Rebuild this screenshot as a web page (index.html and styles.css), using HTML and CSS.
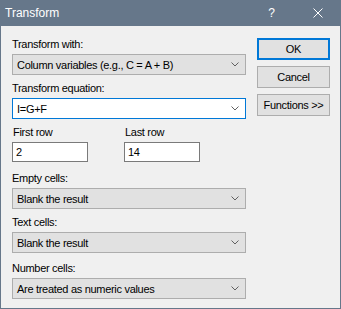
FILE: index.html
```html
<!DOCTYPE html>
<html lang="en">
<head>
    <meta charset="UTF-8">
    <title>Transform</title>
    <link rel="stylesheet" href="styles.css">
</head>
<body>
    <div class="dialog">
        <!-- Barra de título -->
        <div class="titlebar">
            <span class="title">Transform</span>
            <span class="help">?</span>
            <svg class="close" width="10" height="10" viewBox="0 0 10 10">
                <path d="M0.5 0.5 L9.5 9.5 M9.5 0.5 L0.5 9.5" stroke="#ffffff" stroke-width="1" fill="none"/>
            </svg>
        </div>

        <div class="client">
            <div class="form">
                <div class="field">
                    <label>Transform with:</label>
                    <div class="combo">
                        <span>Column variables (e.g., C = A + B)</span>
                        <svg class="chevron" width="8" height="5" viewBox="0 0 8 5"><path d="M0.5 0.5 L4 4 L7.5 0.5" stroke="#606060" fill="none"/></svg>
                    </div>
                </div>

                <div class="field">
                    <label>Transform equation:</label>
                    <div class="combo combo-edit">
                        <span>I=G+F</span>
                        <svg class="chevron" width="8" height="5" viewBox="0 0 8 5"><path d="M0.5 0.5 L4 4 L7.5 0.5" stroke="#606060" fill="none"/></svg>
                    </div>
                </div>

                <div class="field rows">
                    <div class="row-item">
                        <label>First row</label>
                        <div class="edit">2</div>
                    </div>
                    <div class="row-item">
                        <label>Last row</label>
                        <div class="edit">14</div>
                    </div>
                </div>

                <div class="field field-empty">
                    <label>Empty cells:</label>
                    <div class="combo">
                        <span>Blank the result</span>
                        <svg class="chevron" width="8" height="5" viewBox="0 0 8 5"><path d="M0.5 0.5 L4 4 L7.5 0.5" stroke="#606060" fill="none"/></svg>
                    </div>
                </div>

                <div class="field">
                    <label>Text cells:</label>
                    <div class="combo">
                        <span>Blank the result</span>
                        <svg class="chevron" width="8" height="5" viewBox="0 0 8 5"><path d="M0.5 0.5 L4 4 L7.5 0.5" stroke="#606060" fill="none"/></svg>
                    </div>
                </div>

                <div class="field field-number">
                    <label>Number cells:</label>
                    <div class="combo">
                        <span>Are treated as numeric values</span>
                        <svg class="chevron" width="8" height="5" viewBox="0 0 8 5"><path d="M0.5 0.5 L4 4 L7.5 0.5" stroke="#606060" fill="none"/></svg>
                    </div>
                </div>
            </div>

            <!-- Botões -->
            <div class="buttons">
                <button class="btn btn-default">OK</button>
                <button class="btn">Cancel</button>
                <button class="btn">Functions &gt;&gt;</button>
            </div>
        </div>
    </div>
</body>
</html>
```

FILE: styles.css
```css
* {
    margin: 0;
    padding: 0;
    box-sizing: border-box;
}

body {
    font-family: 'Liberation Sans', Arial, sans-serif;
    font-size: 11px;
    letter-spacing: -0.3px;
    color: #000;
    background-color: #f0f0f0;
}

.dialog {
    width: 341px;
    height: 309px;
    border: 1px solid #66778a;
    border-top: none;
    background-color: #f0f0f0;
    display: flex;
    flex-direction: column;
}

.titlebar {
    height: 26px;
    background-color: #66778a;
    color: #ffffff;
    display: flex;
    align-items: center;
    padding-left: 4px;
}

.title {
    font-size: 12px;
    letter-spacing: 0;
    flex: 1;
}

.help {
    font-size: 12px;
    letter-spacing: 0;
    margin-right: 38px;
}

.close {
    margin-right: 17px;
}

.client {
    flex: 1;
    display: flex;
    gap: 11px;
    padding: 12px 10px 0 11px;
}

.form {
    width: 234px;
    display: flex;
    flex-direction: column;
    gap: 7px;
}

.field label {
    display: block;
    line-height: 13px;
    margin-bottom: 3px;
}

.field-empty {
    margin-top: 3px;
}

.field-number {
    margin-top: 2px;
}

.combo {
    height: 21px;
    background-color: #e1e1e1;
    border: 1px solid #adadad;
    display: flex;
    align-items: center;
    justify-content: space-between;
    padding: 0 6px 0 4px;
}

.combo-edit {
    background-color: #ffffff;
    border-color: #0078d7;
}

.chevron {
    display: block;
}

.rows {
    display: flex;
    gap: 36px;
}

.row-item {
    width: 76px;
}

.row-item label {
    padding-left: 1px;
}

.edit {
    height: 20px;
    background-color: #ffffff;
    border: 1px solid #7a7a7a;
    padding-left: 3px;
    line-height: 18px;
}

.buttons {
    width: 73px;
    display: flex;
    flex-direction: column;
    gap: 6px;
}

.btn {
    height: 22px;
    font-family: inherit;
    font-size: 11px;
    letter-spacing: -0.3px;
    color: #000;
    background-color: #e1e1e1;
    border: 1px solid #adadad;
}

.btn-default {
    border: 2px solid #0078d7;
}
```
